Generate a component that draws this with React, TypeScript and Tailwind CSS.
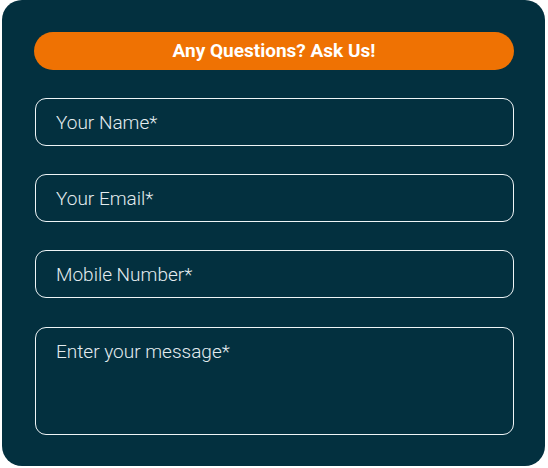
import React from 'react';

const fields = ['Your Name*', 'Your Email*', 'Mobile Number*'];

export default function App() {
  return (
    <div className="w-[548px] h-[468px] bg-white" style={{ fontFamily: 'Roboto, "Liberation Sans", sans-serif' }}>
      <div className="ml-[2px] w-[543px] h-[466px] rounded-[20px] bg-[#03303f] px-[32px] pt-[32px] flex flex-col">
        <div className="h-[38px] w-[480px] rounded-full bg-[#ef7203] flex items-center justify-center text-white font-bold text-[19px]">
          Any Questions? Ask Us!
        </div>
        <div className="mt-[28px] flex flex-col gap-[28px] w-[479px] ml-[1px]">
          {fields.map((f) => (
            <input
              key={f}
              placeholder={f}
              className="h-[48px] w-full rounded-[11px] border-[1.5px] border-[#eef4f6] bg-transparent px-[20px] text-[19px] font-light text-white placeholder:text-[#e3ecef] placeholder:opacity-100 outline-none"
            />
          ))}
          <textarea
            placeholder="Enter your message*"
            className="mt-[1px] h-[108px] w-full resize-none rounded-[11px] border-[1.5px] border-[#eef4f6] bg-transparent px-[20px] pt-[10px] text-[19px] font-light text-white placeholder:text-[#e3ecef] placeholder:opacity-100 outline-none"
          />
        </div>
      </div>
    </div>
  );
}
